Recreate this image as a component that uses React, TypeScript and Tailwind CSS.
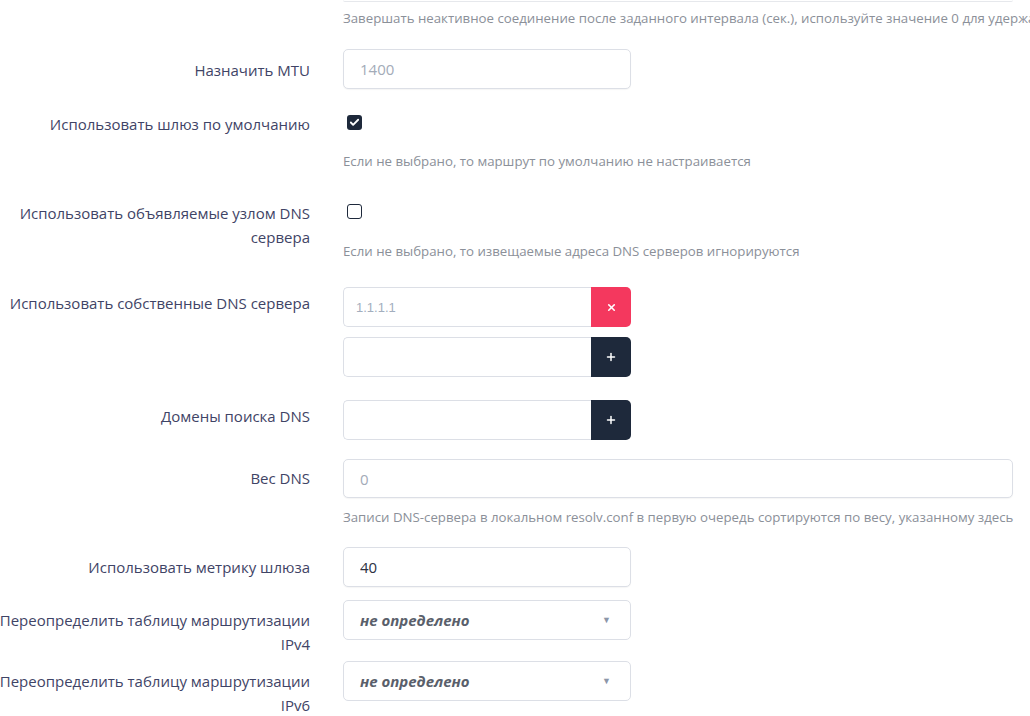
import { Check, Plus, X } from "lucide-react";

const labelCls = "w-[310px] shrink-0 flex flex-col items-end text-right text-[15px] leading-6 text-[#3f4466]";
const helpCls = "text-[13.25px] leading-5 text-[#8b9099] whitespace-nowrap";
const inputCls =
  "h-10 rounded-[5px] border border-[#dcdfe6] bg-white px-4 text-[15px] text-[#2d3142] outline-none shadow-[0_1px_1px_rgba(0,0,0,0.04)] placeholder:text-[#a3abb8]";

const Row = ({
  label,
  pt,
  mt,
  children,
}: {
  label: string[];
  pt: string;
  mt: string;
  children: React.ReactNode;
}) => (
  <div className={`flex gap-[33px] ${mt}`}>
    <div className={`${labelCls} ${pt}`}>
      {label.map((line) => (
        <span key={line} className="whitespace-nowrap">
          {line}
        </span>
      ))}
    </div>
    <div className="flex flex-col">{children}</div>
  </div>
);

const CheckBox = ({ checked }: { checked?: boolean }) =>
  checked ? (
    <span className="flex h-[15px] w-[15px] items-center justify-center rounded-[3px] bg-[#1e293b]">
      <Check className="h-[11px] w-[11px] text-white" strokeWidth={4} />
    </span>
  ) : (
    <span className="block h-[15px] w-[15px] rounded-[3px] border-[1.5px] border-[#1e293b] bg-white" />
  );

const ListInput = ({ value, remove }: { value?: string; remove?: boolean }) => (
  <div className="flex h-10 w-[288px]">
    <input
      className="h-10 w-[248px] rounded-l-[5px] border border-r-0 border-[#dcdfe6] bg-white px-3 font-['Liberation_Sans',sans-serif] text-[13px] outline-none placeholder:text-[#a3aebe]"
      placeholder={value}
    />
    {remove ? (
      <button className="flex h-10 w-10 items-center justify-center rounded-r-[5px] bg-[#f4385e]">
        <X className="h-[11px] w-[11px] text-white" strokeWidth={3.5} />
      </button>
    ) : (
      <button className="flex h-10 w-10 items-center justify-center rounded-r-[5px] bg-[#1e293b]">
        <Plus className="h-[12px] w-[12px] text-white" strokeWidth={3} />
      </button>
    )}
  </div>
);

const Select = () => (
  <div className="flex h-10 w-[288px] items-center justify-between rounded-[5px] border border-[#dcdfe6] bg-white pl-4 pr-[19px]">
    <span className="text-[15px] font-bold italic text-[#5a5f6b]">не определено</span>
    <span className="text-[9px] text-[#8c96a8]">▼</span>
  </div>
);

export default function App() {
  return (
    <div className="h-[716px] w-[1030px] overflow-hidden bg-white font-['Open_Sans',sans-serif]">
      <div className="flex gap-[33px]">
        <div className="w-[310px] shrink-0" />
        <div className="flex flex-col">
          <div className="h-[2px] w-[670px] rounded-b-[5px] border-b border-[#e6e8ec]" />
          <p className={`${helpCls} mt-[6px]`}>
            Завершать неактивное соединение после заданного интервала (сек.), используйте значение 0 для удержания соединения
          </p>
        </div>
      </div>

      <Row label={["Назначить MTU"]} pt="pt-[9px]" mt="mt-[21px]">
        <input className={`${inputCls} w-[288px]`} placeholder="1400" />
      </Row>

      <Row label={["Использовать шлюз по умолчанию"]} pt="pt-0" mt="mt-[23px]">
        <div className="pt-[3px] pl-[4px]">
          <CheckBox checked />
        </div>
        <p className={`${helpCls} mt-[21px]`}>Если не выбрано, то маршрут по умолчанию не настраивается</p>
      </Row>

      <Row label={["Использовать объявляемые узлом DNS", "сервера"]} pt="pt-0" mt="mt-[30px]">
        <div className="pt-[3px] pl-[4px]">
          <CheckBox />
        </div>
        <p className={`${helpCls} mt-[22px]`}>Если не выбрано, то извещаемые адреса DNS серверов игнорируются</p>
      </Row>

      <Row label={["Использовать собственные DNS сервера"]} pt="pt-[4px]" mt="mt-[26px]">
        <ListInput value="1.1.1.1" remove />
        <div className="mt-[10px]">
          <ListInput />
        </div>
      </Row>

      <Row label={["Домены поиска DNS"]} pt="pt-[4px]" mt="mt-[23px]">
        <ListInput />
      </Row>

      <Row label={["Вес DNS"]} pt="pt-[7px]" mt="mt-[19px]">
        <input className={`${inputCls} h-[39px] w-[670px]`} placeholder="0" />
        <p className={`${helpCls} mt-[9px]`}>
          Записи DNS-сервера в локальном resolv.conf в первую очередь сортируются по весу, указанному здесь
        </p>
      </Row>

      <Row label={["Использовать метрику шлюза"]} pt="pt-[8px]" mt="mt-[20px]">
        <input className={`${inputCls} w-[288px]`} defaultValue="40" />
      </Row>

      <Row label={["Переопределить таблицу маршрутизации", "IPv4"]} pt="pt-[8px]" mt="mt-[13px]">
        <Select />
      </Row>

      <Row label={["Переопределить таблицу маршрутизации", "IPv6"]} pt="pt-[8px]" mt="mt-[5px]">
        <Select />
      </Row>
    </div>
  );
}
